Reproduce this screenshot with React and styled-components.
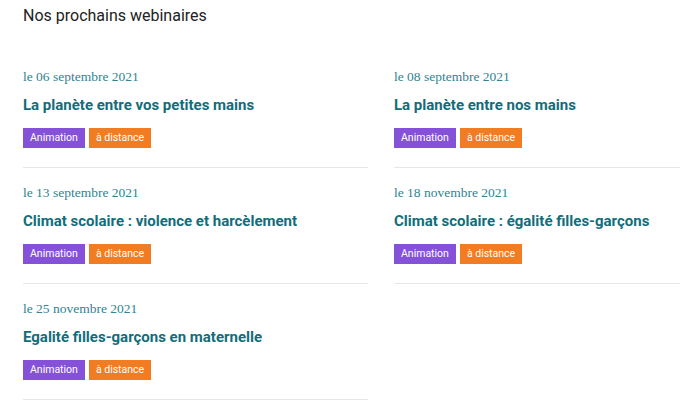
import styled, { createGlobalStyle } from "styled-components";

const GlobalStyle = createGlobalStyle`
  body {
    margin: 0;
    background: #fff;
    overflow: hidden;
    font-family: "Roboto", "Liberation Sans", sans-serif;
  }
`;

const webinars = [
  { date: "le 06 septembre 2021", title: "La planète entre vos petites mains" },
  { date: "le 08 septembre 2021", title: "La planète entre nos mains" },
  { date: "le 13 septembre 2021", title: "Climat scolaire : violence et harcèlement" },
  { date: "le 18 novembre 2021", title: "Climat scolaire : égalité filles-garçons" },
  { date: "le 25 novembre 2021", title: "Egalité filles-garçons en maternelle" },
];

const App = () => {
  return (
    <Page>
      <GlobalStyle />
      <Heading>Nos prochains webinaires</Heading>
      <Grid>
        {webinars.map((w) => (
          <Card key={w.title}>
            <DateLine>{w.date}</DateLine>
            <Title>{w.title}</Title>
            <Tags>
              <Tag $color="#8551d8">Animation</Tag>
              <Tag $color="#f27c22">à distance</Tag>
            </Tags>
          </Card>
        ))}
      </Grid>
    </Page>
  );
};

const Page = styled.div`
  padding: 6px 0 0 23px;
  height: 394px;
  overflow: hidden;
`;

const Heading = styled.h2`
  margin: 0;
  font-size: 16px;
  line-height: 20px;
  font-weight: 400;
  color: #222;
`;

const Grid = styled.div`
  display: grid;
  grid-template-columns: 345px 345px;
  column-gap: 26px;
  margin-top: 26px;
`;

const Card = styled.div`
  padding: 16px 0 19px;
  border-bottom: 1px solid #e6e6e6;
`;

const DateLine = styled.div`
  font-family: "Liberation Serif", serif;
  font-size: 13.5px;
  line-height: 18px;
  color: #2f8491;
`;

const Title = styled.div`
  margin-top: 9px;
  font-size: 15px;
  line-height: 20px;
  font-weight: 700;
  color: #126d7a;
`;

const Tags = styled.div`
  display: flex;
  gap: 4px;
  margin-top: 13px;
`;

const Tag = styled.span`
  height: 20px;
  line-height: 20px;
  padding: 0 7px;
  font-size: 10.5px;
  color: #fff;
  background: ${(p) => p.$color};
`;

export default App;
